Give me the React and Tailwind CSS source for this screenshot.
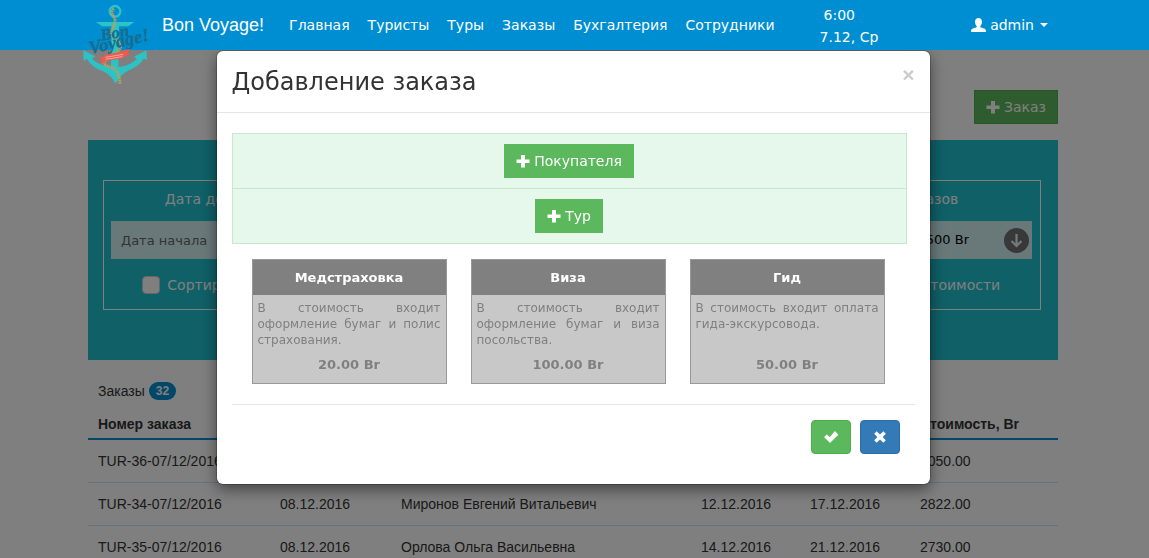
import React from "react";

const navItems = ["Главная", "Туристы", "Туры", "Заказы", "Бухгалтерия", "Сотрудники"];

const orders = [
  ["TUR-36-07/12/2016", "07.12.2016", "Иванов Сергей Петрович", "10.12.2016", "15.12.2016", "1050.00"],
  ["TUR-34-07/12/2016", "08.12.2016", "Миронов Евгений Витальевич", "12.12.2016", "17.12.2016", "2822.00"],
  ["TUR-35-07/12/2016", "08.12.2016", "Орлова Ольга Васильевна", "14.12.2016", "21.12.2016", "2730.00"],
];

const services = [
  { name: "Медстраховка", text: "В стоимость входит оформление бумаг и полис страхования.", price: "20.00 Br" },
  { name: "Виза", text: "В стоимость входит оформление бумаг и виза посольства.", price: "100.00 Br" },
  { name: "Гид", text: "В стоимость входит оплата гида-экскурсовода.", price: "50.00 Br" },
];

function PlusIcon() {
  return (
    <svg className="h-[14px] w-[14px]" viewBox="0 0 14 14" fill="currentColor" aria-hidden="true">
      <path d="M5 1h4v4.500h4.500v3.500H9v4.500H5V9H.5V5.500H5z" />
    </svg>
  );
}

function CheckIcon() {
  return (
    <svg className="h-4 w-4" viewBox="0 0 16 16" fill="currentColor" aria-hidden="true">
      <path d="M12.300 2.400l2.800 2.800c.3.3.3.6 0 .9l-7.600 7.500c-.3.3-.6.3-.9 0L1.400 8.600c-.3-.3-.3-.6 0-.9l1.900-1.900c.3-.3.6-.3.900 0L6.700 8.200l4.700-5.800c.3-.3.6-.3.900 0z" />
    </svg>
  );
}

function CrossIcon() {
  return (
    <svg className="h-[14px] w-[14px]" viewBox="0 0 14 14" fill="currentColor" aria-hidden="true">
      <path d="M3.700 1.200L7 4.400l3.300-3.200 2.500 2.500L9.600 7l3.200 3.300-2.500 2.500L7 9.600l-3.300 3.200-2.500-2.500L4.400 7 1.200 3.700z" />
    </svg>
  );
}

function UserIcon() {
  return (
    <svg className="h-[14px] w-[15px]" viewBox="0 0 15 14" fill="currentColor" aria-hidden="true">
      <path d="M7.500 0C9.600 0 11 1.400 11 3.700c0 1.800-.7 3.400-1.700 4.300v.9c.2.5 1 .7 2.400 1.200 2.200.8 3.100 1.300 3.200 2.600V14H.1v-1.300c.1-1.300 1-1.800 3.200-2.600C4.700 9.600 5.500 9.400 5.700 8.900V8C4.700 7.100 4 5.500 4 3.700 4 1.400 5.400 0 7.500 0z" />
    </svg>
  );
}

function Logo() {
  return (
    <svg className="h-[87px] w-[70px]" viewBox="60 0 210 261" role="img" aria-label="Bon Voyage!">
      <circle cx="165" cy="34" r="16" fill="none" stroke="#2cc3c6" strokeWidth="7" />
      <path d="M107 66h116l-18 13h-28l-2 122q32-2 56-24l-9-7 37-19 2 30-9-6q-14 24-44 35-27 12-41 41-14-28-41-39-32-11-45-36l-10 7-1-32 36 18-10 7q22 21 57 25l2-122h-28z" fill="#2cc3c6" />
      <path d="M162 26q-12 8-2 22t0 32q-14 26 12 44t-18 44 2 34q22 10 24 50" fill="none" stroke="#b3a15f" strokeWidth="9" strokeDasharray="5 2" />
      <g fill="#176d8c" stroke="#176d8c" strokeWidth="1" fontFamily="Liberation Serif, serif" fontStyle="italic" fontWeight="bold">
        <text x="124" y="122" fontSize="50" transform="rotate(-10 124 122)">Bon</text>
        <text x="91" y="162" fontSize="55" transform="rotate(-13 91 162)">Voyage!</text>
      </g>
      <path d="M118 172l14-2 1-5 60-11v-4l16-3-5 9 5 8-13 4-1 5-60 11-1 4-16 4 6-10z" fill="#ea5c50" />
      <path d="M136 172l54-9M137 178l50-8" stroke="#f7c9c2" strokeWidth="2" />
    </svg>
  );
}

function Header() {
  return (
    <header className="relative z-30 bg-[#008ed2] pr-[3px] text-white">
      <div className="relative mx-auto flex h-[50px] max-w-[970px] items-center">
        <a href="#home" className="absolute -left-2 top-0"><Logo /></a>
        <a href="#home" className="ml-[74px] mr-4 font-['Liberation_Sans',sans-serif] text-lg leading-5">Bon Voyage!</a>
        <nav className="flex">
          {navItems.map((item) => (
            <a key={item} href="#section" className="px-[9px] leading-5">{item}</a>
          ))}
        </nav>
        <div className="ml-9 whitespace-nowrap pt-0.5 leading-[22px]">
          <div className="pl-1">6:00</div>
          <div>7.12, Ср</div>
        </div>
        <button type="button" className="ml-auto flex items-center gap-1 pr-[10px]">
          <UserIcon />
          admin
          <svg className="ml-0.5 h-1 w-2" viewBox="0 0 8 4" fill="currentColor" aria-hidden="true"><path d="M0 0h8L4 4z" /></svg>
        </button>
      </div>
    </header>
  );
}

function Filters() {
  return (
    <form className="mt-4 bg-[#1ec0ce] px-[15px] pb-[50px] pt-10 text-white">
      <div className="mr-[2px] grid h-[130px] grid-cols-3 border border-white">
        <div className="px-[7px] pt-2">
          <label htmlFor="start" className="block text-center leading-5">Дата добавления заказов</label>
          <input id="start" placeholder="Дата начала" className="mt-3 h-[38px] w-full bg-white/80 px-[10px] text-[13px] placeholder:text-[#666]" />
          <label className="mt-4 flex items-center justify-center gap-[7px] leading-5">
            <input type="checkbox" className="h-[18px] w-[18px] appearance-none rounded border border-[#ccc] bg-white" />
            Сортировать по дате заказа
          </label>
        </div>
        <div />
        <div className="pl-4 pr-2 pt-2">
          <label htmlFor="price" className="block text-center leading-5">Стоимость заказов</label>
          <div className="mt-3 flex h-[38px] items-center bg-white/80 pr-[3px]">
            <input id="price" defaultValue="0 Br - 2500 Br" className="min-w-0 flex-1 pr-[35px] text-right text-[13px] text-black" />
            <button type="button" aria-label="Применить">
              <svg className="h-[25px] w-[25px]" viewBox="0 0 25 25" fill="none" aria-hidden="true">
                <circle cx="12.500" cy="12.500" r="12.500" fill="#707070" />
                <path d="M12.500 6v12M7.500 13l5 5 5-5" stroke="#e8f4f4" strokeWidth="2.200" />
              </svg>
            </button>
          </div>
          <label className="mt-4 flex items-center justify-center gap-[7px] leading-5">
            <input type="checkbox" className="h-[18px] w-[18px] appearance-none rounded border border-[#ccc] bg-white" />
            Сортировать по стоимости
          </label>
        </div>
      </div>
    </form>
  );
}

function Orders() {
  return (
    <section className="font-['Liberation_Sans',sans-serif] text-[#333]">
      <h2 className="flex h-[61px] items-center gap-1 px-[10px]">
        Заказы
        <span className="rounded-full bg-[#008ed2] px-[7px] text-xs font-bold leading-[18px] text-white">32</span>
      </h2>
      <table className="-mt-3 w-full table-fixed border-collapse text-left">
        <colgroup>
          <col className="w-[182px]" />
          <col className="w-[121px]" />
          <col className="w-[300px]" />
          <col className="w-[109px]" />
          <col className="w-[110px]" />
          <col />
        </colgroup>
        <thead>
          <tr className="h-[30px] border-b-2 border-[#008ed2]">
            {["Номер заказа", "Дата", "Покупатель", "Начало", "Конец", "Стоимость, Br"].map((title) => (
              <th key={title} className="px-[10px] leading-5">{title}</th>
            ))}
          </tr>
        </thead>
        <tbody>
          {orders.map((row) => (
            <tr key={row[0]} className="h-[43px] border-b border-[#d3e4f2]">
              {row.map((cell, i) => (
                <td key={i} className="whitespace-nowrap px-[10px] leading-5">{cell}</td>
              ))}
            </tr>
          ))}
        </tbody>
      </table>
    </section>
  );
}

const addButton = "flex h-[34px] items-center gap-1 border px-[11px] bg-[#5cb85c] text-white";

function OrderDialog() {
  return (
    <div className="fixed inset-0 z-20 overflow-hidden bg-black/50 pr-[3px] pt-[51px]">
      <div
        role="dialog"
        aria-modal="true"
        aria-labelledby="dialog-title"
        className="mx-auto max-w-[713px] rounded-md bg-white text-[#333] shadow-[0_5px_15px_rgba(0,0,0,0.5)] ring-1 ring-black/20"
      >
        <div className="flex items-start justify-between border-b border-[#e5e5e5] px-[15px] pb-[13px] pt-[15px]">
          <h1 id="dialog-title" className="text-2xl leading-[33px]">Добавление заказа</h1>
          <button type="button" aria-label="Закрыть" className="font-['Liberation_Sans',sans-serif] text-[21px] font-bold leading-[18px] text-[#ccc]">×</button>
        </div>
        <div className="px-[15px] pt-5">
          <div className="mr-2 divide-y divide-[#c8e8cc] border border-[#c8e8cc] bg-[#e6f7ec]">
            <div className="flex justify-center py-[10px]">
              <button type="button" className={`${addButton} border-[#5cb85c]`}><PlusIcon />Покупателя</button>
            </div>
            <div className="flex justify-center py-[10px]">
              <button type="button" className={`${addButton} border-[#5cb85c]`}><PlusIcon />Тур</button>
            </div>
          </div>
          <div className="mt-[15px] grid grid-cols-3 gap-6 pl-5 pr-[30px] text-[13px]">
            {services.map((service) => (
              <article key={service.name} className="flex h-[125px] flex-col border border-[#999] bg-[#c8c8c8] text-[#808080]">
                <h2 className="bg-[#808080] text-center font-bold leading-[35px] text-white">{service.name}</h2>
                <p className="px-[5px] pt-[5px] text-justify text-xs leading-4">{service.text}</p>
                <p className="mt-auto pb-[10px] text-center font-bold leading-4">{service.price}</p>
              </article>
            ))}
          </div>
          <div className="mt-5 flex justify-end gap-[9px] border-t border-[#e5e5e5] pb-[30px] pr-[15px] pt-[15px]">
            <button type="button" aria-label="Сохранить" className="flex h-[34px] w-10 items-center justify-center rounded border border-[#4cae4c] bg-[#5cb85c] text-white"><CheckIcon /></button>
            <button type="button" aria-label="Отмена" className="flex h-[34px] w-10 items-center justify-center rounded border border-[#2e6da4] bg-[#337ab7] text-white"><CrossIcon /></button>
          </div>
        </div>
      </div>
    </div>
  );
}

export default function App() {
  return (
    <div className="h-screen overflow-hidden bg-white font-['DejaVu_Sans',sans-serif] text-sm">
      <Header />
      <div className="pr-[3px]">
        <main className="mx-auto max-w-[970px] pt-10">
          <div className="flex justify-end">
            <button type="button" className={`${addButton} border-[#4cae4c]`}><PlusIcon />Заказ</button>
          </div>
          <Filters />
          <Orders />
        </main>
      </div>
      <OrderDialog />
    </div>
  );
}
